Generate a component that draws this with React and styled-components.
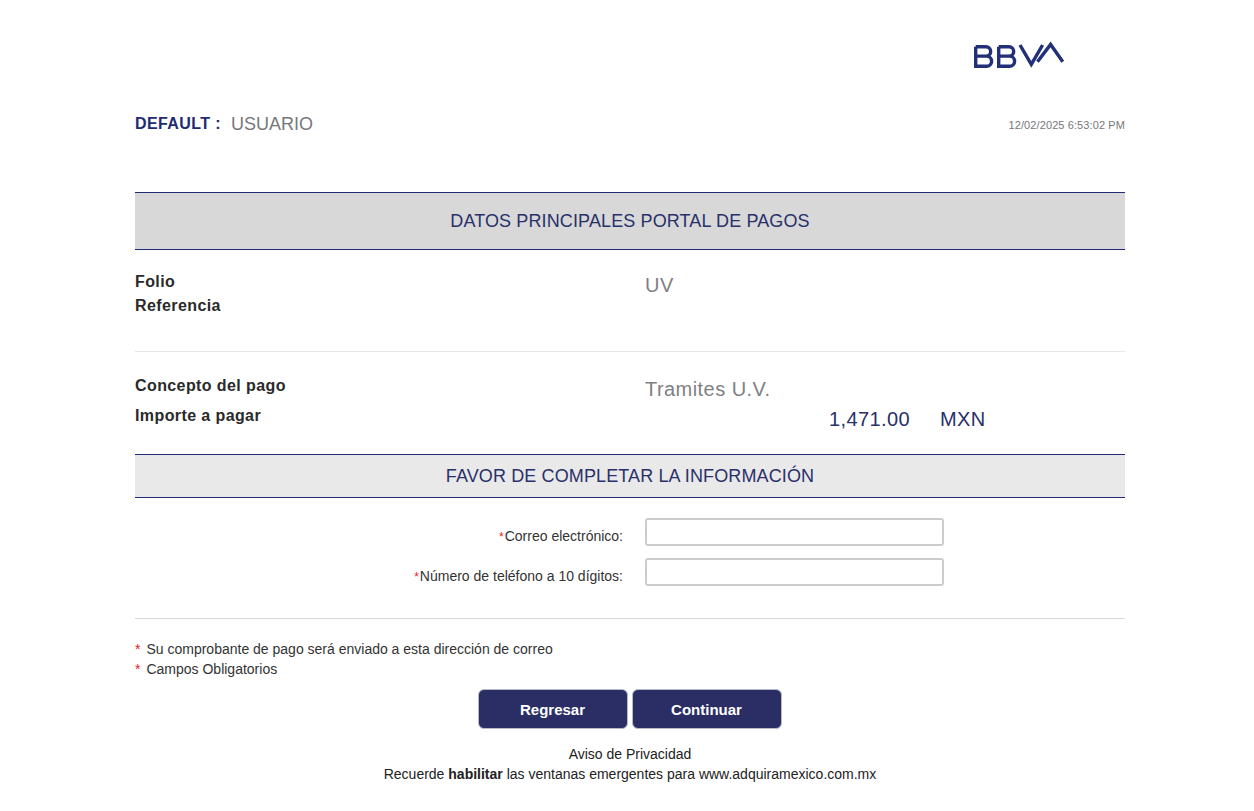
import styled, { createGlobalStyle } from 'styled-components';

const GlobalStyle = createGlobalStyle`
  html, body {
    margin: 0;
    padding: 0;
    background: #fff;
    font-family: "Liberation Sans", Arial, sans-serif;
  }
`;

const NAVY = '#212b72';

const BbvaLogo = () => (
  <svg width="92" height="30" viewBox="0 0 92 30" fill="none" stroke="#232f78" strokeWidth="3.4" strokeLinejoin="miter">
    <path d="M2.7 7.7H13a4.7 4.7 0 0 1 0 9.4H2.7M13.5 17.1a5.1 5.1 0 0 1 0 10.2H2.7V7.7" />
    <path d="M25.7 7.7H36a4.7 4.7 0 0 1 0 9.4H25.7M36.5 17.1a5.1 5.1 0 0 1 0 10.2H25.7V7.7" />
    <path d="M47 6L58.3 25.4L69.6 6" />
    <path d="M64.5 22.7L77.6 5.4L89.8 22.7" />
  </svg>
);

const Page = styled.div`
  width: 990px;
  margin: 0 0 0 135px;
`;

const LogoRow = styled.div`
  display: flex;
  justify-content: flex-end;
  padding: 39px 60px 0 0;
  height: 61px;
`;

const UserRow = styled.div`
  display: flex;
  align-items: center;
  justify-content: space-between;
  height: 48px;
`;

const UserName = styled.div`
  display: flex;
  align-items: center;
  gap: 10px;
`;

const UserLabel = styled.span`
  color: ${NAVY};
  font-size: 16px;
  font-weight: 700;
  letter-spacing: 0.4px;
`;

const UserValue = styled.span`
  color: #77777a;
  font-size: 18px;
`;

const Timestamp = styled.span`
  color: #77777a;
  font-size: 11px;
  letter-spacing: 0.1px;
  padding-top: 2px;
`;

const SectionBar = styled.div`
  display: flex;
  align-items: center;
  justify-content: center;
  box-sizing: border-box;
  height: ${(p) => p.$height}px;
  margin-top: ${(p) => p.$top}px;
  background: ${(p) => p.$bg};
  border-top: 1px solid ${NAVY};
  border-bottom: 1px solid ${NAVY};
  color: #29306a;
  font-size: 18px;
  letter-spacing: 0.12px;
`;

const InfoGrid = styled.div`
  display: grid;
  grid-template-columns: 510px 1fr;
  height: ${(p) => p.$height}px;
  padding-top: ${(p) => p.$pad}px;
  box-sizing: border-box;
  border-bottom: ${(p) => (p.$divider ? '1px solid #e8e8e8' : '0')};
`;

const Labels = styled.div`
  display: flex;
  flex-direction: column;
  gap: ${(p) => p.$gap}px;
`;

const Label = styled.div`
  color: #2a2a2a;
  font-size: 16px;
  font-weight: 700;
  line-height: 18px;
  letter-spacing: 0.4px;
`;

const Value = styled.div`
  color: #808083;
  font-size: 20px;
  line-height: 24px;
  letter-spacing: 0.45px;
`;

const Amount = styled.div`
  display: flex;
  gap: 30px;
  margin: 6px 0 0 184px;
  color: #29306a;
  font-size: 20px;
  line-height: 24px;
  letter-spacing: 0.4px;
`;

const Form = styled.div`
  display: flex;
  flex-direction: column;
  gap: 12px;
  padding: 20px 0 32px;
  border-bottom: 1px solid #d8d8d8;
`;

const FormRow = styled.label`
  display: grid;
  grid-template-columns: 488px 299px;
  column-gap: 22px;
  align-items: center;
`;

const FormLabel = styled.span`
  text-align: right;
  color: #333;
  font-size: 14px;
  padding-top: 7px;
`;

const Star = styled.span`
  color: #e81c1c;
  font-size: ${(p) => p.$size}px;
  margin-right: ${(p) => p.$gap || 0}px;
`;

const Input = styled.input`
  box-sizing: border-box;
  width: 299px;
  height: 28px;
  padding: 0 6px;
  border: 2px solid #cccccc;
  border-radius: 3px;
  background: #fff;
  outline: none;
`;

const Notes = styled.div`
  padding-top: 20px;
  color: #333;
  font-size: 14px;
  line-height: 20px;
`;

const Note = styled.div`
  display: flex;
  gap: 6px;
`;

const Buttons = styled.div`
  display: flex;
  justify-content: center;
  gap: 4px;
  margin: 10px 0 0 -1px;
`;

const Button = styled.button`
  width: 150px;
  height: 40px;
  padding: 1px 0 0;
  background: #2a2e65;
  border: 1px solid #b9bac9;
  border-radius: 6px;
  color: #fff;
  font: 700 15px "Liberation Sans", Arial, sans-serif;
`;

const Footer = styled.div`
  margin-top: 15px;
  text-align: center;
  color: #222;
  font-size: 14px;
  line-height: 20px;
`;

export default function App() {
  return (
    <Page>
      <GlobalStyle />
      <LogoRow>
        <BbvaLogo />
      </LogoRow>
      <UserRow>
        <UserName>
          <UserLabel>DEFAULT :</UserLabel>
          <UserValue>USUARIO</UserValue>
        </UserName>
        <Timestamp>12/02/2025 6:53:02 PM</Timestamp>
      </UserRow>

      <SectionBar $height={58} $top={44} $bg="#d8d8d8">DATOS PRINCIPALES PORTAL DE PAGOS</SectionBar>
      <InfoGrid $height={102} $pad={23} $divider>
        <Labels $gap={6}>
          <Label>Folio</Label>
          <Label>Referencia</Label>
        </Labels>
        <Value>UV</Value>
      </InfoGrid>
      <InfoGrid $height={102} $pad={25}>
        <Labels $gap={12}>
          <Label>Concepto del pago</Label>
          <Label>Importe a pagar</Label>
        </Labels>
        <div>
          <Value>Tramites U.V.</Value>
          <Amount>
            <span>1,471.00</span>
            <span>MXN</span>
          </Amount>
        </div>
      </InfoGrid>

      <SectionBar $height={44} $top={0} $bg="#e9e9e9">FAVOR DE COMPLETAR LA INFORMACIÓN</SectionBar>
      <Form>
        <FormRow>
          <FormLabel><Star $size={12} $gap={1}>*</Star>Correo electrónico:</FormLabel>
          <Input type="text" />
        </FormRow>
        <FormRow>
          <FormLabel><Star $size={12} $gap={1}>*</Star>Número de teléfono a 10 dígitos:</FormLabel>
          <Input type="text" />
        </FormRow>
      </Form>

      <Notes>
        <Note><Star $size={14}>*</Star>Su comprobante de pago será enviado a esta dirección de correo</Note>
        <Note><Star $size={14}>*</Star>Campos Obligatorios</Note>
      </Notes>
      <Buttons>
        <Button>Regresar</Button>
        <Button>Continuar</Button>
      </Buttons>
      <Footer>
        <div>Aviso de Privacidad</div>
        <div>Recuerde <b>habilitar</b> las ventanas emergentes para www.adquiramexico.com.mx</div>
      </Footer>
    </Page>
  );
}
